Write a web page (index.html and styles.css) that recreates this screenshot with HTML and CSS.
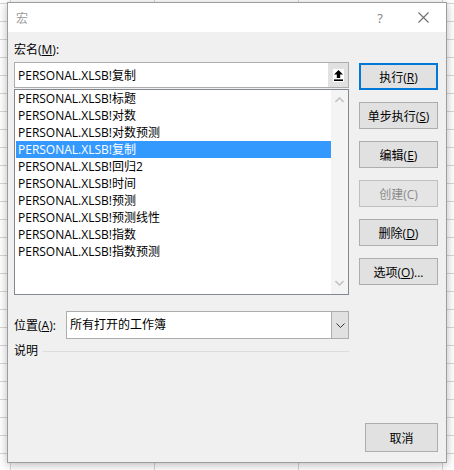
FILE: index.html
```html
<!DOCTYPE html>
<html lang="zh-CN">
<head>
<meta charset="utf-8">
<title>宏</title>
<link rel="stylesheet" href="styles.css">
</head>
<body>
<div class="dialog">
  <div class="titlebar">
    <span class="title">宏</span>
    <span class="help">?</span>
    <span class="close"><svg width="11" height="11" viewBox="0 0 11 11"><path d="M0.5 0.5 L10.5 10.5 M10.5 0.5 L0.5 10.5" stroke="#6f6f6f" stroke-width="1.1" fill="none"/></svg></span>
  </div>
  <div class="body">
    <div class="main">
      <div class="label">宏名(<u>M</u>):</div>
      <div class="namebox">
        <span class="nametext">PERSONAL.XLSB!复制</span>
        <span class="refbtn"><span class="refinner"><svg width="9" height="11" viewBox="0 0 9 11"><path d="M4.5 0 L9 4.6 H6.2 V8 H2.8 V4.6 H0 Z" fill="#000"/><rect x="0" y="9.4" width="9" height="1.6" fill="#000"/></svg></span></span>
      </div>
      <div class="listbox">
        <ul class="items">
          <li>PERSONAL.XLSB!标题</li>
          <li>PERSONAL.XLSB!对数</li>
          <li>PERSONAL.XLSB!对数预测</li>
          <li class="sel">PERSONAL.XLSB!复制</li>
          <li>PERSONAL.XLSB!回归2</li>
          <li>PERSONAL.XLSB!时间</li>
          <li>PERSONAL.XLSB!预测</li>
          <li>PERSONAL.XLSB!预测线性</li>
          <li>PERSONAL.XLSB!指数</li>
          <li>PERSONAL.XLSB!指数预测</li>
        </ul>
        <div class="scroll">
          <svg width="9" height="6" viewBox="0 0 9 6"><polyline points="0.5,5 4.5,1 8.5,5" stroke="#c4c4c4" stroke-width="1.6" fill="none"/></svg>
          <svg width="9" height="6" viewBox="0 0 9 6"><polyline points="0.5,1 4.5,5 8.5,1" stroke="#c4c4c4" stroke-width="1.6" fill="none"/></svg>
        </div>
      </div>
      <div class="locrow">
        <span class="loclabel">位置(<u>A</u>):</span>
        <div class="select">
          <span class="seltext">所有打开的工作簿</span>
          <span class="selbtn"><svg width="9" height="5" viewBox="0 0 9 5"><polyline points="0.5,0.5 4.5,4.5 8.5,0.5" stroke="#333" stroke-width="1" fill="none"/></svg></span>
        </div>
      </div>
      <div class="descrow">
        <span>说明</span>
        <span class="rule"></span>
      </div>
    </div>
    <div class="side">
      <button class="btn primary">执行(<u>R</u>)</button>
      <button class="btn">单步执行(<u>S</u>)</button>
      <button class="btn">编辑(<u>E</u>)</button>
      <button class="btn disabled">创建(C)</button>
      <button class="btn">删除(<u>D</u>)</button>
      <button class="btn">选项(<u>O</u>)...</button>
      <button class="btn cancel">取消</button>
    </div>
  </div>
</div>
</body>
</html>
```

FILE: styles.css
```css
html, body {
  margin: 0;
  padding: 0;
}
body {
  width: 454px;
  height: 470px;
  overflow: hidden;
  font-family: "Open Sans", "Noto Sans CJK SC", sans-serif;
  font-size: 12px;
  color: #000;
  background-color: #fff;
  background-image:
    repeating-linear-gradient(to bottom, transparent 0, transparent 3px, #d6d6d6 3px, #d6d6d6 4px, transparent 4px, transparent 18px),
    repeating-linear-gradient(to right, transparent 0, transparent 10px, #d6d6d6 10px, #d6d6d6 11px, transparent 11px, transparent 144px);
  background-size: 454px 18px, 144px 470px;
}
.dialog {
  margin: 2px 0 0 7px;
  width: 438px;
  height: 459px;
  border: 1px solid #9d9d9d;
  background: #f0f0f0;
  box-shadow: 0 2px 9px rgba(0, 0, 0, 0.28);
  display: flex;
  flex-direction: column;
}
.titlebar {
  height: 29px;
  background: #fff;
  display: flex;
  align-items: center;
  flex: none;
}
.title {
  margin-left: 8px;
  color: #9a9a9a;
  font-size: 12px;
  flex: 1;
}
.help {
  color: #888;
  font-size: 13px;
  font-family: "Noto Sans", sans-serif;
  margin-right: 35px;
}
.close {
  display: flex;
  margin-right: 17px;
}
.body {
  flex: 1;
  display: flex;
  gap: 10px;
  padding: 0 8px 0 6px;
}
.main {
  width: 335px;
  display: flex;
  flex-direction: column;
}
.label {
  padding-top: 10px;
  line-height: 16px;
  height: 16px;
  margin-bottom: 4px;
}
.namebox {
  height: 24px;
  border: 1px solid #adadad;
  background: #fff;
  display: flex;
  align-items: center;
}
.nametext {
  flex: 1;
  padding-left: 3px;
}
.refbtn {
  width: 20px;
  height: 24px;
  background: #e1e1e1;
  display: flex;
  align-items: center;
  justify-content: center;
}
.refinner {
  width: 11px;
  height: 13px;
  background: #fff;
  display: flex;
  align-items: center;
  justify-content: center;
}
.listbox {
  margin-top: 1px;
  height: 204px;
  border: 1px solid #828790;
  background: #fff;
  display: flex;
}
.items {
  list-style: none;
  margin: 0;
  padding: 0 0 0 1px;
  flex: 1;
}
.items li {
  height: 17px;
  line-height: 17px;
  padding-left: 2px;
  white-space: nowrap;
}
.items li.sel {
  background: #3399ff;
  color: #fff;
}
.scroll {
  width: 17px;
  background: #f4f4f4;
  display: flex;
  flex-direction: column;
  align-items: center;
  justify-content: space-between;
  padding: 7px 0 8px;
}
.locrow {
  margin-top: 16px;
  display: flex;
  align-items: center;
}
.loclabel {
  width: 52px;
}
.select {
  flex: 1;
  height: 26px;
  border: 1px solid #adadad;
  background: #fff;
  display: flex;
  align-items: stretch;
}
.seltext {
  flex: 1;
  padding-left: 3px;
  line-height: 26px;
}
.selbtn {
  width: 16px;
  background: #e1e1e1;
  border-left: 1px solid #adadad;
  display: flex;
  align-items: center;
  justify-content: center;
}
.descrow {
  margin-top: 3px;
  display: flex;
  align-items: center;
  gap: 5px;
  line-height: 18px;
}
.rule {
  flex: 1;
  height: 1px;
  background: #dcdcdc;
}
.side {
  width: 79px;
  display: flex;
  flex-direction: column;
  gap: 12px;
  padding-top: 31px;
  padding-bottom: 10px;
}
.btn {
  height: 27px;
  width: 79px;
  padding: 0;
  margin: 0;
  font-family: inherit;
  font-size: 12px;
  color: #000;
  background: #e1e1e1;
  border: 1px solid #adadad;
  flex: none;
}
.btn.primary {
  border: 2px solid #0078d7;
}
.btn.disabled {
  color: #8a8a8a;
  background: #e5e5e5;
  border-color: #bfbfbf;
}
.btn.cancel {
  margin-top: auto;
  width: 73px;
  height: 29px;
  align-self: flex-end;
}
u {
  text-decoration: underline;
  text-underline-offset: 1px;
}
```
